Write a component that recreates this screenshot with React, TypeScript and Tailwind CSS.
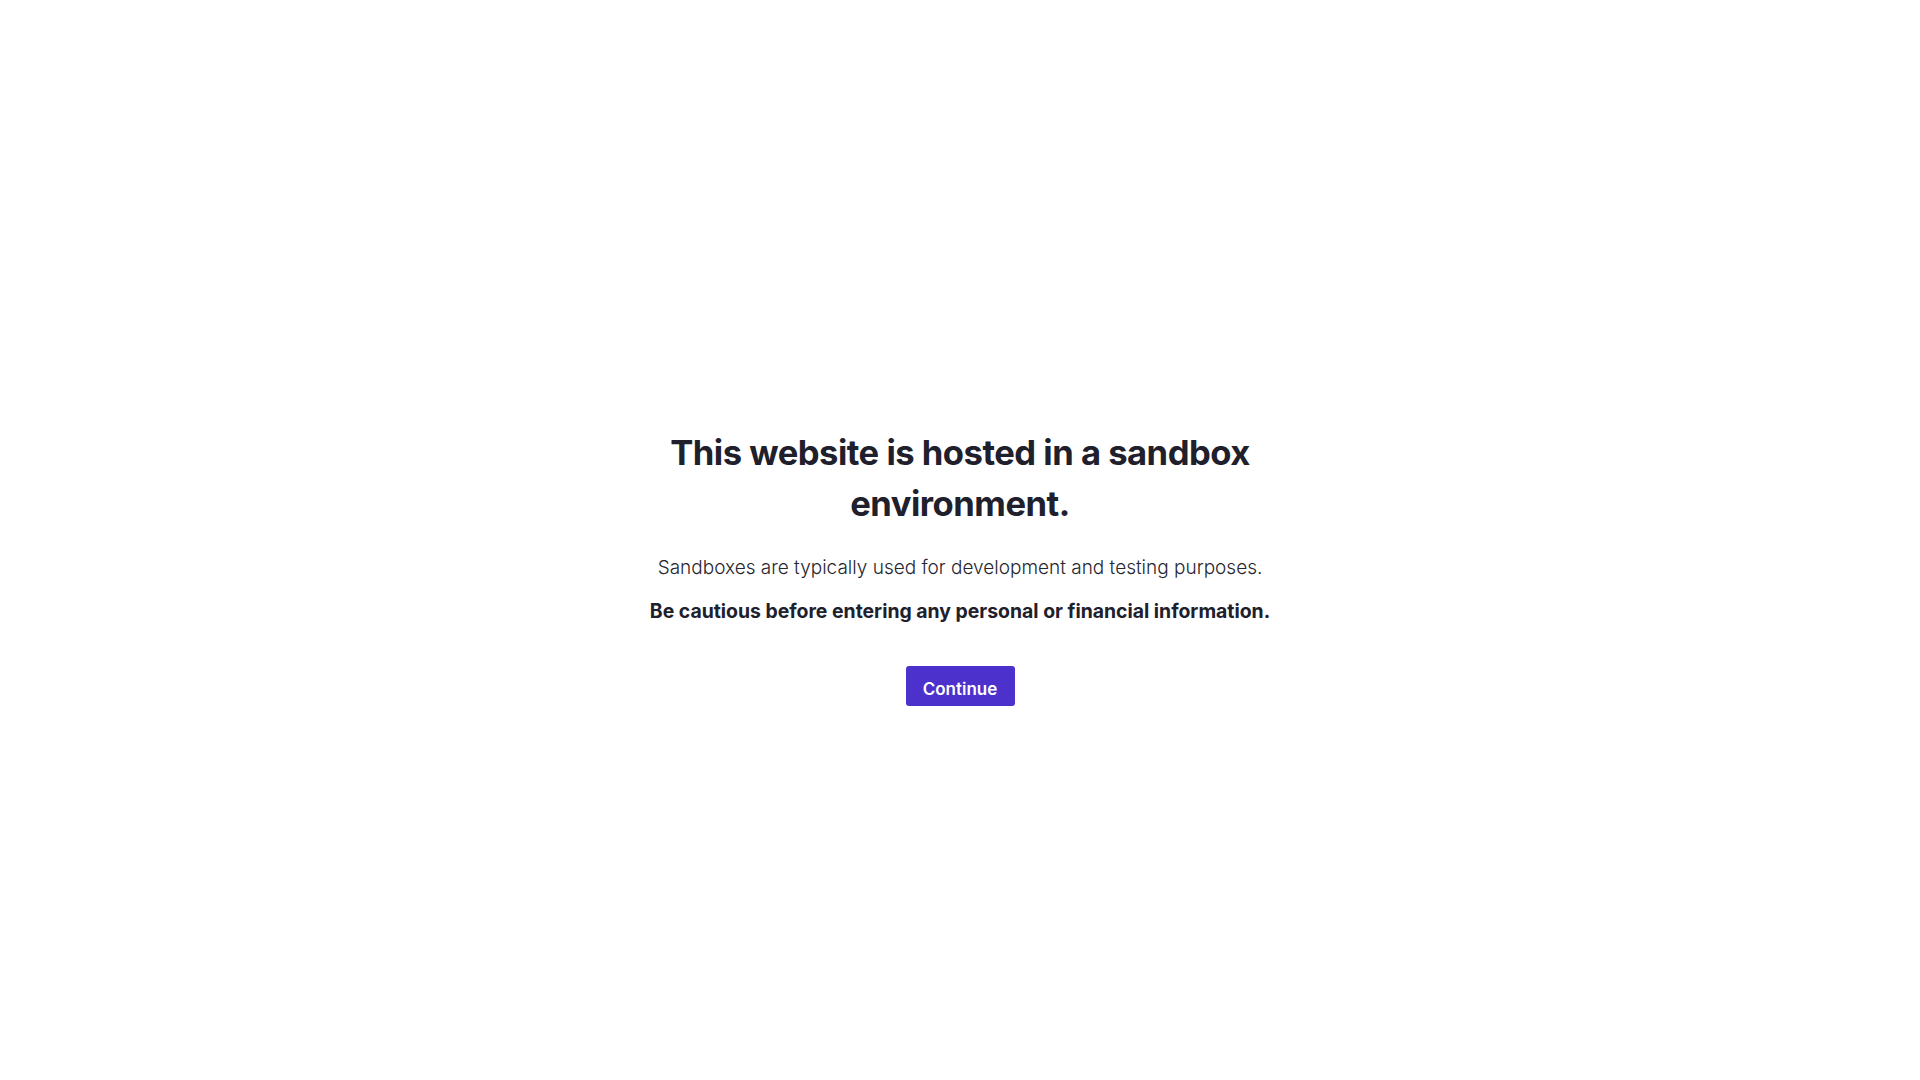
import React from "react";

export default function App() {
  return (
    <div
      className="min-h-screen w-full bg-white flex flex-col items-center justify-center pt-[53px] text-[#20202c]"
      style={{ fontFamily: "Inter, 'Noto Sans', sans-serif" }}
    >
      <h1 className="max-w-[660px] text-center text-[34.6px] leading-[51px] font-bold tracking-[-0.5px]">
        This website is hosted in a sandbox environment.
      </h1>
      <p className="mt-[25px] text-center text-[19px] leading-[27px] font-light text-[#26262f]">
        Sandboxes are typically used for development and testing purposes.
      </p>
      <p className="mt-[17px] text-center text-[19.4px] leading-[27px] font-bold">
        Be cautious before entering any personal or financial information.
      </p>
      <button className="mt-[41px] w-[109px] h-[40px] pt-[8px] rounded-[3px] bg-[#4d31cc] text-white text-[17px] font-semibold">
        Continue
      </button>
    </div>
  );
}
